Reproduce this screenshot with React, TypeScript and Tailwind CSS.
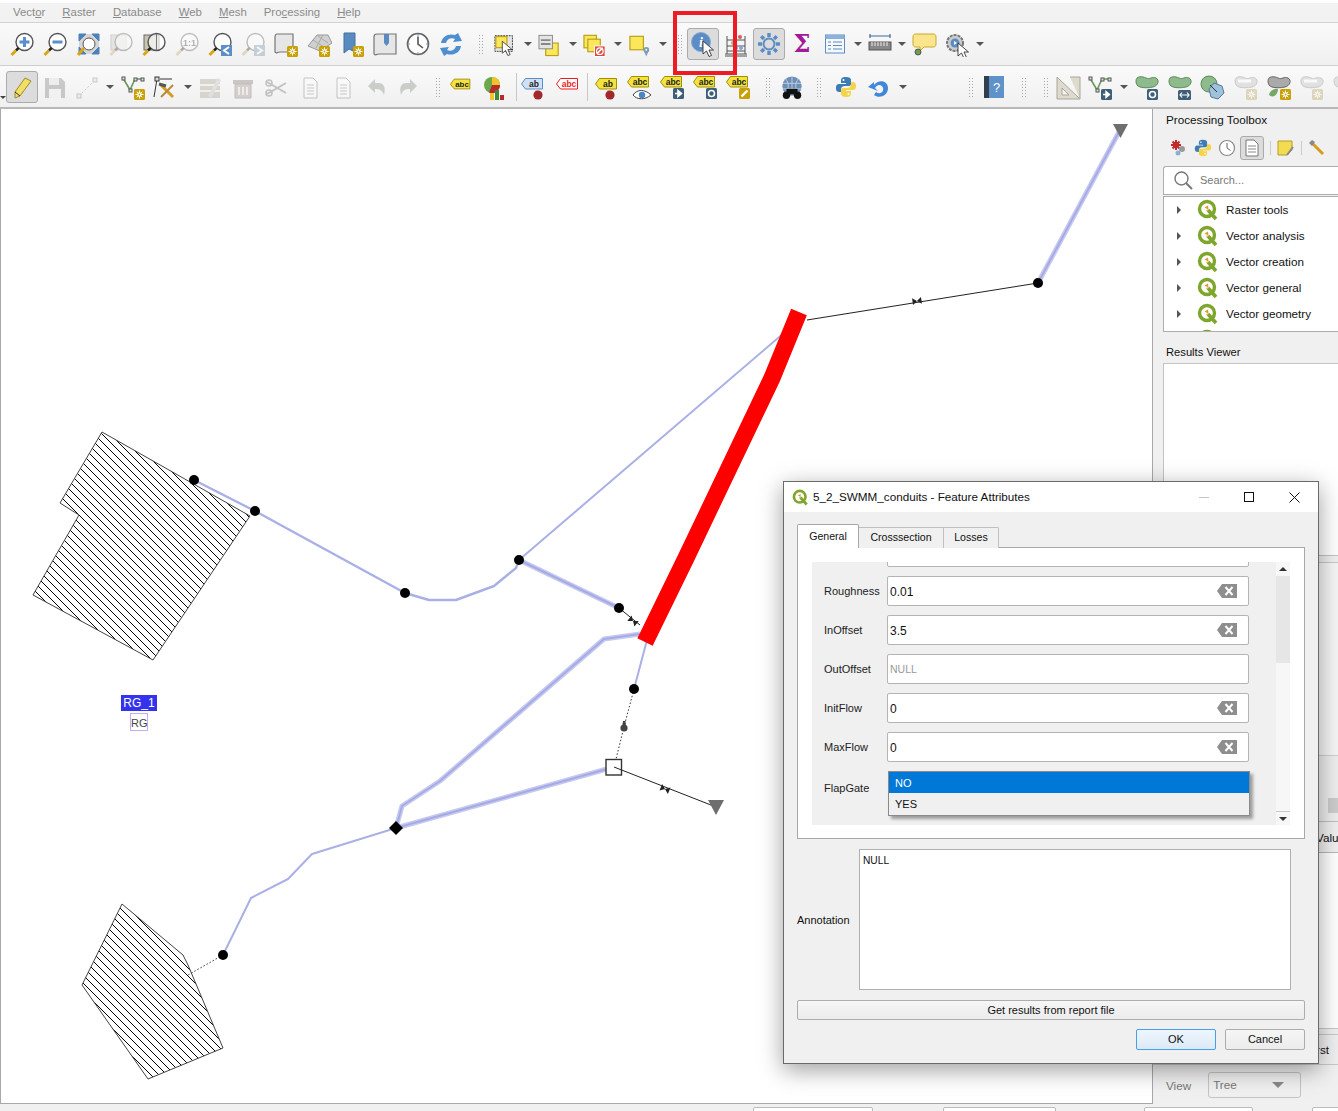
import type { ReactNode } from "react"

const Ico = ({ children, off, w = 26 }: { children: ReactNode; off?: boolean; w?: number }) => (
  <svg width={w} height={26} viewBox={`0 -1 ${w} 26`} className={off ? "opacity-35 saturate-50" : ""}>
    {children}
  </svg>
)

const Cursor = ({ x, y, s = 1 }: { x: number; y: number; s?: number }) => (
  <path
    transform={`translate(${x} ${y}) scale(${s})`}
    d="M0 0 L0 13 L3.5 10 L6 15.5 L8.5 14.5 L6 9 L10.5 9 Z"
    fill="#fff"
    stroke="#333"
    strokeWidth="0.9"
  />
)

const Badge = ({ x = 14, y = 14 }: { x?: number; y?: number }) => (
  <g transform={`translate(${x} ${y})`}>
    <rect width="11" height="11" rx="1.5" fill="#c9a005" />
    <path d="M5.5 1.5 V9.5 M1.5 5.5 H9.5 M2.7 2.7 L8.3 8.3 M8.3 2.7 L2.7 8.3" stroke="#fff" strokeWidth="1" />
    <circle cx="5.5" cy="5.5" r="2.2" fill="#fff" />
    <circle cx="5.5" cy="5.5" r="0.9" fill="#c9a005" />
  </g>
)

const Lens = ({ children, off, back }: { children?: ReactNode; off?: boolean; back?: ReactNode }) => (
  <Ico off={off}>
    {back}
    <circle cx="15.5" cy="10" r="8.5" fill={back ? "#ffffffaa" : "#fff"} stroke="#555" strokeWidth="1.4" />
    {children}
    <path d="M9.7 15.8 L7 18.5" stroke="#222" strokeWidth="2.6" />
    <path d="M7 18.5 L2.5 23" stroke="#dba514" strokeWidth="3" />
  </Ico>
)

const BlueBox = ({ dir }: { dir: "l" | "r" }) => (
  <g>
    <rect x="14" y="13" width="11" height="11" fill="#5c8fc7" />
    <path d={dir === "l" ? "M22 15 L17 18.5 L22 22" : "M17 15 L22 18.5 L17 22"} fill="none" stroke="#fff" strokeWidth="2" />
  </g>
)

const Tag = ({ text, fill = "#f4e33e", line = "#a38f00", color = "#222", x = 0, y = 3 }: { text: string; fill?: string; line?: string; color?: string; x?: number; y?: number }) => (
  <g transform={`translate(${x} ${y})`}>
    <path d="M0.5 6 L4.5 0.5 H21.5 V11 H4.5 Z" fill={fill} stroke={line} />
    <text x="13" y="9" fontSize="8.5" fontWeight="700" textAnchor="middle" fill={color} fontFamily="Liberation Sans">
      {text}
    </text>
  </g>
)

const Pin = () => (
  <g>
    <path d="M14 14 L16.5 14 L16.5 19 H14 Z" fill="#cfcfcf" />
    <circle cx="17" cy="20" r="4.6" fill="#a3282c" />
  </g>
)

const Poly = ({ fill = "#8dbb8b", line = "#5e8a5c" }: { fill?: string; line?: string }) => (
  <path d="M2 6 C2 1 8 1 12 3 C16 5 18 1 22 3 C26 5 24 11 19 12 C14 13 10 13 6 12 C3 11 2 9 2 6 Z" fill={fill} stroke={line} />
)

const Qgis = ({ size = 22 }: { size?: number }) => (
  <svg width={size} height={size} viewBox="0 0 22 22">
    <circle cx="10" cy="10" r="7.5" fill="#fff" stroke="#7ea62d" strokeWidth="3.4" />
    <path d="M11 11 L19 20" stroke="#7ea62d" strokeWidth="3.6" />
    <path d="M7.5 8.5 L11 6.5 L11.5 10.5 Z" fill="#ef8f2f" />
    <path d="M9 12 L10 10 L11.5 11.5 Z" fill="#e8b23a" />
  </svg>
)

const Python = ({ w = 22 }: { w?: number }) => (
  <svg width={w} height={w} viewBox="0 0 22 22">
    <path d="M11 1 C7 1 6 2 6 5 V7 H11 V8 H4 C1 8 1 11 1 12 C1 15 2 16 5 16 H6 V13 C6 11 8 10 10 10 H14 C16 10 16 8 16 7 V4 C16 2 14 1 11 1 Z" fill="#3d7db5" />
    <path d="M11 21 C15 21 16 20 16 17 V15 H11 V14 H18 C21 14 21 11 21 10 C21 7 20 6 17 6 H16 V9 C16 11 14 12 12 12 H8 C6 12 6 14 6 15 V18 C6 20 8 21 11 21 Z" fill="#f6d44a" />
    <circle cx="8.5" cy="4" r="1" fill="#fff" />
    <circle cx="13.5" cy="18" r="1" fill="#fff" />
  </svg>
)

const row1 = [
  <Lens><path d="M15.5 5 V15 M10.5 10 H20.5" stroke="#5b8fc9" strokeWidth="3" /></Lens>,
  <Lens><path d="M10.5 10 H20.5" stroke="#5b8fc9" strokeWidth="3" /></Lens>,
  <Ico>
    <rect x="4" y="2" width="20" height="20" fill="#d5d5d5" />
    <path d="M4 2 H11 L4 9 Z M24 2 V9 L17 2 Z M24 22 H17 L24 15 Z M4 22 V15 L11 22 Z" fill="#4d82ba" stroke="#4d82ba" />
    <circle cx="14" cy="12" r="6" fill="#fff" stroke="#555" />
    <path d="M9 16 L3 23" stroke="#dba514" strokeWidth="3" />
  </Ico>,
  <Lens off back={<rect x="3" y="3" width="15" height="15" fill="#c8c6b0" stroke="#888" />} />,
  <Lens back={<rect x="3" y="3" width="15" height="15" fill="#c8c6b0" stroke="#666" />}><path d="M15.5 2 V18" stroke="#777" /></Lens>,
  <Lens off><text x="15.5" y="13.5" fontSize="9" fontWeight="700" textAnchor="middle" fill="#333" fontFamily="Liberation Sans">1:1</text></Lens>,
  <Lens><BlueBox dir="l" /></Lens>,
  <Lens off><BlueBox dir="r" /></Lens>,
  <Ico>
    <path d="M4 2 H20 V20 H7 C4 20 3 22 2 20 V5 C2 3 3 2 4 2 Z" fill="#e6e6e6" stroke="#777" strokeWidth="1.2" />
    <Badge />
  </Ico>,
  <Ico>
    <path d="M2 14 L11 3 H22 L26 11 L14 19 Z" fill="#d0d0d0" stroke="#999" />
    <path d="M7 8 L18 15 M12 4 L22 11 M10 16 L17 3" stroke="#aaa" />
    <Badge x="13" y="14" />
  </Ico>,
  <Ico>
    <path d="M5 1 H16 V20 L10 17 L5 21 Z" fill="#5a8bc0" stroke="#44709f" />
    <Badge x="14" y="14" />
  </Ico>,
  <Ico>
    <path d="M5 2 H24 V22 H7 C4 22 3 24 2 22 V5 C2 3 3 2 5 2 Z" fill="#e6e6e6" stroke="#777" strokeWidth="1.2" />
    <path d="M12 2 H17 V11 L14.5 14 L12 11 Z" fill="#5a8bc0" />
  </Ico>,
  <Ico>
    <circle cx="13" cy="12" r="10.5" fill="#fff" stroke="#666" strokeWidth="1.6" />
    <path d="M13 4.5 V12 L18 16" fill="none" stroke="#555" strokeWidth="1.6" />
    <circle cx="13" cy="3" r="0.8" fill="#5a8bc0" />
    <circle cx="13" cy="21" r="0.8" fill="#5a8bc0" />
    <circle cx="4" cy="12" r="0.8" fill="#5a8bc0" />
    <circle cx="22" cy="12" r="0.8" fill="#5a8bc0" />
  </Ico>,
  <Ico>
    <path d="M3 11 C4 4 11 1 17 3 L20 1 L24 9 L15 10 L17 7 C13 5 9 7 8 11 Z" fill="#4f8fd0" />
    <path d="M23 14 C22 21 15 24 9 22 L6 24 L2 16 L11 15 L9 18 C13 20 17 18 18 14 Z" fill="#4f8fd0" />
  </Ico>,
]

const Drop = () => <span className="w-0 h-0 border-x-[4px] border-t-[4px] border-x-transparent border-t-[#555]" />

const Grip = () => <span className="w-[6px] h-[20px] bg-[radial-gradient(#a8a8a8_0.7px,transparent_0.8px)] bg-[length:3px_3px]" />

const Slot = ({ w, on, children }: { w: string; on?: boolean; children?: ReactNode }) => (
  <div className={`${w} ${on ? "h-[32px] bg-[#dcdcdc] border border-[#ababab] rounded-[3px]" : "h-full"} shrink-0 flex items-center justify-center`}>
    {children}
  </div>
)

const Arrow = ({ w }: { w: string }) => (
  <Slot w={w}>
    <Drop />
  </Slot>
)

const YellowBox = ({ x, y, s = 13 }: { x: number; y: number; s?: number }) => (
  <rect x={x} y={y} width={s} height={s} fill="#fbe75c" stroke="#bb9f14" strokeWidth="1.2" />
)

function TopToolbar() {
  return (
    <div className="h-[43px] shrink-0 flex items-center pl-[5px] bg-gradient-to-b from-[#fafafa] to-[#f0f0f0] border-b border-[#cfcfcf]">
      {row1.map((icon, i) => (
        <Slot key={i} w="w-[33px]">
          {icon}
        </Slot>
      ))}
      <Slot w="w-[27px]"><Grip /></Slot>
      <Slot w="w-[24px]">
        <Ico>
          <rect x="1" y="3" width="19" height="17" fill="#e4e4e4" stroke="#333" strokeDasharray="2 1" />
          <YellowBox x={2} y={4} s={12} />
          <Cursor x={9} y={9} />
        </Ico>
      </Slot>
      <Arrow w="w-[20px]" />
      <Slot w="w-[25px]">
        <Ico>
          <YellowBox x={8} y={11} />
          <rect x="1" y="3" width="14" height="14" fill="#e4e4e4" stroke="#888" />
          <path d="M3 8 H13 M3 12 H13" stroke="#888" strokeWidth="2" />
        </Ico>
      </Slot>
      <Arrow w="w-[20px]" />
      <Slot w="w-[25px]">
        <Ico>
          <YellowBox x={1} y={3} />
          <YellowBox x={5} y={7} />
          <rect x="12" y="14" width="11" height="11" fill="#d84a3f" stroke="#fff" />
          <path d="M14.5 22 L20.5 16" stroke="#fff" strokeWidth="1.6" />
          <circle cx="17.5" cy="19.5" r="3.4" fill="none" stroke="#fff" strokeWidth="1.3" />
        </Ico>
      </Slot>
      <Arrow w="w-[20px]" />
      <Slot w="w-[25px]">
        <Ico>
          <YellowBox x={2} y={4} s={14} />
          <circle cx="19" cy="18" r="3" fill="#7d9cb8" />
          <path d="M16.5 19 L19 25 L21.5 19 Z" fill="#7d9cb8" />
          <circle cx="19" cy="18" r="1" fill="#fff" />
        </Ico>
      </Slot>
      <Arrow w="w-[20px]" />
      <Slot w="w-[14px]"><Grip /></Slot>
      <Slot w="w-[32px]" on>
        <Ico>
          <circle cx="11" cy="10" r="9.5" fill="#5b8cc4" stroke="#84a8d3" />
          <text x="11" y="15" fontSize="14" fontWeight="700" fontStyle="italic" textAnchor="middle" fill="#fff" fontFamily="Liberation Serif">i</text>
          <Cursor x={13} y={9} />
        </Ico>
      </Slot>
      <Slot w="w-[34px]">
        <Ico w={24}>
          <path d="M3 4 V22 M21 4 V22 M1 22 H23 M1 24 H23 M3 8 H21 M3 14 H21 M3 19 H21" stroke="#555" strokeWidth="1" fill="none" />
          <circle cx="16" cy="5" r="2" fill="#d85a55" />
          <circle cx="9" cy="11" r="2" fill="#8fc06a" />
          <circle cx="12" cy="16" r="2" fill="#7ea8d6" />
          <circle cx="17" cy="16" r="2" fill="#7ea8d6" />
        </Ico>
      </Slot>
      <Slot w="w-[32px]" on>
        <Ico>
          <circle cx="13" cy="12" r="5.5" fill="none" stroke="#5b8cc4" strokeWidth="2" />
          <path d="M13 1 V5 M13 19 V23 M2 12 H6 M20 12 H24 M5.2 4.2 L8 7 M20.8 4.2 L18 7 M5.2 19.8 L8 17 M20.8 19.8 L18 17" stroke="#5b8cc4" strokeWidth="3.4" />
        </Ico>
      </Slot>
      <Slot w="w-[34px]">
        <svg width="30" height="40" viewBox="0 0 30 40">
          <text x="15" y="28" fontSize="24" fontWeight="700" textAnchor="middle" fill="#a01a9a" fontFamily="DejaVu Serif">Σ</text>
        </svg>
      </Slot>
      <Slot w="w-[32px]">
        <Ico w={22}>
          <rect x="1.5" y="3" width="19" height="18" fill="#f4f8fc" stroke="#5b8cc4" />
          <rect x="1.5" y="3" width="19" height="4" fill="#8db2da" />
          <path d="M4 10 H7 M9 10 H18 M4 13.5 H7 M9 13.5 H18 M4 17 H7 M9 17 H18" stroke="#5b8cc4" />
        </Ico>
      </Slot>
      <Arrow w="w-[14px]" />
      <Slot w="w-[30px]">
        <Ico w={24}>
          <path d="M2 4 H22 M2 2 V6 M22 2 V6" stroke="#3d6a9a" strokeWidth="1.2" />
          <rect x="1" y="10" width="22" height="8" fill="#888" stroke="#555" />
          <path d="M4 10 V14 M7 10 V14 M10 10 V14 M13 10 V14 M16 10 V14 M19 10 V14" stroke="#eee" />
        </Ico>
      </Slot>
      <Arrow w="w-[14px]" />
      <Slot w="w-[32px]">
        <Ico>
          <path d="M4 2 H21 C23 2 24 3 24 5 V12 C24 14 23 15 21 15 H12 L8 19 V15 H4 C2 15 1 14 1 12 V5 C1 3 2 2 4 2 Z" fill="#fbe58c" stroke="#c8aa2a" />
          <circle cx="6" cy="20" r="3" fill="#6f9e48" stroke="#555" />
        </Ico>
      </Slot>
      <Slot w="w-[32px]">
        <Ico>
          <circle cx="11" cy="11" r="8" fill="#ccc" stroke="#777" strokeWidth="2" strokeDasharray="3 1" />
          <circle cx="11" cy="11" r="4.5" fill="#5b8cc4" />
          <path d="M10 9 L13 11 L10 13 Z" fill="#fff" />
          <Cursor x={14} y={11} />
        </Ico>
      </Slot>
      <Arrow w="w-[14px]" />
    </div>
  )
}

const Trash = ({ off }: { off?: boolean }) => (
  <Ico off={off}>
    <rect x="3" y="5" width="20" height="4" fill="#8b6a60" />
    <path d="M5 9 H21 V23 H5 Z" fill="#a88" stroke="#755" />
    <path d="M9 12 V20 M13 12 V20 M17 12 V20" stroke="#fff" strokeWidth="1.4" />
  </Ico>
)

const Page = () => (
  <Ico off>
    <path d="M7 3 H16 L20 7 V23 H7 Z" fill="#fff" stroke="#666" />
    <path d="M10 10 H17 M10 13 H17 M10 16 H17 M10 19 H17" stroke="#777" />
  </Ico>
)

const Curve = ({ flip }: { flip?: boolean }) => (
  <Ico off>
    <g transform={flip ? "translate(26 0) scale(-1 1)" : ""}>
      <path d="M5 11 L12 4 V8 H16 C21 8 23 13 21 20 C19 15 17 14 12 14 V18 Z" fill="#7a8a6a" />
    </g>
  </Ico>
)

function BottomToolbar() {
  return (
    <div className="h-[43px] shrink-0 flex items-center pl-[6px] relative overflow-hidden bg-gradient-to-b from-[#fafafa] to-[#f0f0f0] border-b-2 border-[#b8b8b8]">
      <span className="absolute left-0 top-[30px] w-0 h-0 border-x-[3px] border-t-[3px] border-x-transparent border-t-[#444]" />
      <Slot w="w-[32px]" on>
        <Ico>
          <path d="M16 3 L22 6 L11 21 L6 23 L6 17 Z" fill="#f2df62" stroke="#9a8a2a" />
          <path d="M6 17 L11 21" stroke="#333" />
        </Ico>
      </Slot>
      <Slot w="w-[34px]">
        <Ico off>
          <path d="M3 3 H19 L23 7 V23 H3 Z" fill="#777" />
          <rect x="7" y="3" width="10" height="7" fill="#ddd" />
          <rect x="7" y="14" width="12" height="9" fill="#eee" />
        </Ico>
      </Slot>
      <Slot w="w-[32px]">
        <Ico off>
          <path d="M4 21 L20 5" stroke="#777" strokeDasharray="2 2" />
          <rect x="2" y="19" width="4" height="4" fill="#ddd" stroke="#777" />
          <rect x="18" y="3" width="4" height="4" fill="#ddd" stroke="#777" />
        </Ico>
      </Slot>
      <Arrow w="w-[12px]" />
      <Slot w="w-[36px]">
        <Ico>
          <path d="M2 3 L9 15 L14 4 H22" fill="none" stroke="#6a9a5a" strokeWidth="1.6" />
          <rect x="1" y="2" width="3" height="3" fill="#ddd" stroke="#555" />
          <rect x="8" y="14" width="3" height="3" fill="#ddd" stroke="#555" />
          <rect x="13" y="3" width="3" height="3" fill="#ddd" stroke="#555" />
          <rect x="20" y="3" width="3" height="3" fill="#ddd" stroke="#555" />
          <Badge x="13" y="14" />
        </Ico>
      </Slot>
      <Slot w="w-[28px]">
        <Ico>
          <path d="M4 4 L1 22" stroke="#333" />
          <rect x="2" y="2" width="4" height="4" fill="#ddd" stroke="#333" />
          <path d="M7 4 H19" stroke="#333" />
          <path d="M8 10 L20 22" stroke="#d89a22" strokeWidth="3" />
          <path d="M20 10 L8 22" stroke="#b88a3a" strokeWidth="2" />
          <path d="M6 9 L13 11" stroke="#555" strokeWidth="3" />
        </Ico>
      </Slot>
      <Arrow w="w-[16px]" />
      <Slot w="w-[30px]">
        <Ico off>
          <rect x="2" y="4" width="20" height="19" fill="#a39d72" />
          <path d="M2 10 H22 M2 16 H22" stroke="#fff" strokeWidth="1.4" />
          <path d="M10 21 L20 3 L23 5 L13 23 Z" fill="#bbb" />
        </Ico>
      </Slot>
      <Slot w="w-[34px]"><Trash off /></Slot>
      <Slot w="w-[34px]">
        <Ico off>
          <path d="M3 7 L22 18 M3 19 L22 8" stroke="#666" strokeWidth="2" />
          <circle cx="5" cy="8" r="3" fill="none" stroke="#666" strokeWidth="1.6" />
          <circle cx="5" cy="18" r="3" fill="none" stroke="#666" strokeWidth="1.6" />
        </Ico>
      </Slot>
      <Slot w="w-[32px]"><Page /></Slot>
      <Slot w="w-[34px]"><Page /></Slot>
      <Slot w="w-[32px]"><Curve /></Slot>
      <Slot w="w-[34px]"><Curve flip /></Slot>
      <Slot w="w-[24px]"><Grip /></Slot>
      <Slot w="w-[24px]"><Ico><Tag text="abc" /></Ico></Slot>
      <Slot w="w-[42px]">
        <Ico>
          <circle cx="10" cy="10" r="8" fill="#6aa84a" />
          <path d="M10 10 L10 2 A8 8 0 0 1 18 10 Z" fill="#f2c32a" />
          <path d="M10 10 L18 10 A8 8 0 0 1 7 17.5 Z" fill="#b92a2a" />
          <rect x="8" y="18" width="4" height="7" fill="#f2c32a" />
          <rect x="13" y="15" width="4" height="10" fill="#3d8a3a" />
          <rect x="18" y="20" width="4" height="5" fill="#b92a2a" />
        </Ico>
      </Slot>
      <span className="w-px h-[28px] self-center bg-[#c8c8c8] shrink-0" />
      <Slot w="w-[34px]"><Ico><Tag text="ab" fill="#cfe2f5" line="#5b8cc4" /><Pin /></Ico></Slot>
      <Slot w="w-[36px]"><Ico><Tag text="abc" fill="#fff" line="#e81c1c" color="#e81c1c" /></Ico></Slot>
      <span className="w-px h-[28px] self-center bg-[#c8c8c8] shrink-0" />
      <Slot w="w-[36px]"><Ico><Tag text="ab" x={2} /><Pin /></Ico></Slot>
      <Slot w="w-[32px]">
        <Ico>
          <Tag text="abc" y={1} />
          <path d="M6 20 C10 14 18 14 24 20 C18 25 10 25 6 20 Z" fill="#fff" stroke="#444" />
          <circle cx="15" cy="20" r="3.2" fill="#4a86c5" />
        </Ico>
      </Slot>
      <Slot w="w-[34px]">
        <Ico>
          <Tag text="abc" y={1} />
          <rect x="13" y="13" width="11" height="11" rx="1.5" fill="#3f5f78" />
          <path d="M15 18.5 H20 M18 15.5 L21.5 18.5 L18 21.5 Z" stroke="#fff" strokeWidth="1.6" fill="#fff" />
        </Ico>
      </Slot>
      <Slot w="w-[32px]">
        <Ico>
          <Tag text="abc" y={1} />
          <rect x="13" y="13" width="11" height="11" rx="1.5" fill="#3f5f78" />
          <circle cx="18.5" cy="18.5" r="3" fill="none" stroke="#fff" strokeWidth="1.6" />
        </Ico>
      </Slot>
      <Slot w="w-[34px]">
        <Ico>
          <Tag text="abc" y={1} />
          <rect x="13" y="13" width="11" height="11" rx="1.5" fill="#c9a005" />
          <path d="M15.5 21.5 L21.5 15.5" stroke="#fff" strokeWidth="2.4" />
        </Ico>
      </Slot>
      <Slot w="w-[24px]"><Grip /></Slot>
      <Slot w="w-[24px]">
        <Ico>
          <circle cx="13" cy="11" r="10.5" fill="#6d8fb5" />
          <path d="M3 8 H23 M3 14 H23 M13 1 V21 M6 3 C10 8 10 14 6 19 M20 3 C16 8 16 14 20 19" stroke="#d5e0ec" strokeWidth="0.8" fill="none" />
          <circle cx="7" cy="21" r="4" fill="#111" />
          <circle cx="19" cy="21" r="4" fill="#111" />
          <rect x="7" y="14" width="12" height="6" fill="#111" />
        </Ico>
      </Slot>
      <Slot w="w-[30px]"><Grip /></Slot>
      <Slot w="w-[24px]"><Python /></Slot>
      <Slot w="w-[40px]">
        <Ico>
          <path d="M3 12 L9 7 L9 10 C13 4 23 5 23 13 C23 21 14 24 9 20 L11 17 C15 20 19 17 18 13 C17 9 12 9 10 13 L13 16 Z" fill="#3f88d8" />
        </Ico>
      </Slot>
      <Arrow w="w-[10px]" />
      <div className="w-[55px] shrink-0" />
      <Slot w="w-[16px]"><Grip /></Slot>
      <Slot w="w-[30px]">
        <svg width="20" height="22" viewBox="0 0 20 22">
          <rect width="20" height="22" fill="#5f92c8" />
          <rect width="5" height="22" fill="#2f3f50" />
          <text x="12.5" y="16" fontSize="13" textAnchor="middle" fill="#fff" fontFamily="Liberation Sans">?</text>
        </svg>
      </Slot>
      <Slot w="w-[30px]"><Grip /></Slot>
      <Slot w="w-[14px]"><Grip /></Slot>
      <Slot w="w-[32px]">
        <Ico>
          <path d="M1 2 L24 24 H1 Z M6 13 V20 H13 Z" fill="#dedbce" stroke="#aaa69a" fillRule="evenodd" />
          <path d="M14 2 H24 V24" fill="#dedbce" stroke="#aaa69a" />
        </Ico>
      </Slot>
      <Slot w="w-[32px]">
        <Ico>
          <path d="M2 3 L9 15 L14 4 H22" fill="none" stroke="#6a9a5a" strokeWidth="1.6" />
          <rect x="1" y="2" width="3" height="3" fill="#ddd" stroke="#555" />
          <rect x="8" y="14" width="3" height="3" fill="#ddd" stroke="#555" />
          <rect x="13" y="3" width="3" height="3" fill="#ddd" stroke="#555" />
          <rect x="20" y="3" width="3" height="3" fill="#ddd" stroke="#555" />
          <rect x="13" y="14" width="11" height="11" rx="1.5" fill="#3f5f78" />
          <path d="M15 19.5 H20 M18 16.5 L21.5 19.5 L18 22.5 Z" stroke="#fff" strokeWidth="1.4" fill="#fff" />
        </Ico>
      </Slot>
      <Arrow w="w-[14px]" />
      <Slot w="w-[32px]">
        <Ico>
          <Poly />
          <rect x="13" y="14" width="11" height="11" rx="1.5" fill="#3f5f78" />
          <circle cx="18.5" cy="19.5" r="3" fill="none" stroke="#fff" strokeWidth="1.6" />
        </Ico>
      </Slot>
      <Slot w="w-[34px]">
        <Ico>
          <Poly />
          <rect x="11" y="15" width="13" height="10" rx="1.5" fill="#3f5f78" />
          <path d="M13 20 H22 M15 17.5 L13 20 L15 22.5 M20 17.5 L22 20 L20 22.5" stroke="#fff" strokeWidth="1.2" fill="none" />
        </Ico>
      </Slot>
      <Slot w="w-[32px]">
        <Ico>
          <circle cx="9" cy="9" r="8" fill="#8dbb8b" stroke="#5e8a5c" />
          <path d="M14 8 L22 11 L24 18 L18 24 L11 22 L9 14 Z" fill="#9fc3dd" stroke="#54789a" />
          <path d="M10 10 L17 17" stroke="#333" />
        </Ico>
      </Slot>
      <Slot w="w-[34px]">
        <Ico off>
          <Poly fill="#bbb" line="#777" />
          <path d="M5 6 H18" stroke="#fff" strokeWidth="3" />
          <Badge x="13" y="14" />
        </Ico>
      </Slot>
      <Slot w="w-[32px]">
        <Ico>
          <Poly fill="#aaa" line="#666" />
          <path d="M3 20 C4 15 9 13 12 14 C12 19 8 24 3 20 Z" fill="#78a868" />
          <Badge x="14" y="14" />
        </Ico>
      </Slot>
      <Slot w="w-[34px]">
        <Ico off>
          <Poly fill="#bbb" line="#777" />
          <path d="M5 6 H18" stroke="#fff" strokeWidth="3" />
          <Badge x="13" y="14" />
        </Ico>
      </Slot>
      <Slot w="w-[32px]">
        <Ico off>
          <Poly fill="#bbb" line="#777" />
        </Ico>
      </Slot>
    </div>
  )
}

const Bowtie = ({ x, y, a }: { x: number; y: number; a: number }) => (
  <path transform={`translate(${x} ${y}) rotate(${a})`} d="M-4.5 -3.5 L4.5 3.5 L4.5 -3.5 L-4.5 3.5 Z" fill="#222" />
)

const LILAC = "#aab0e6"

// thick conduits are a pale band with a darker core
const thick = [
  "M1120 130 L1038 283",
  "M519 560 L619 608",
  "M640 634 L604 639 L440 781 L402 806 L396 828",
  "M396 828 L614 767",
]

function MapCanvas() {
  return (
    <div className="relative flex-1 min-w-0 bg-white border-l border-r border-b border-[#a8a8a8]">
      <svg width="1151" height="994" viewBox="1 109 1151 994" className="block">
        <defs>
          <pattern id="hatch" x="1" y="109" width="8" height="8" patternUnits="userSpaceOnUse">
            {[0, 1, 2, 3, 4, 5, 6, 7].map((i) => (
              <rect key={i} x={i} y={i} width="1" height="1" fill="#000" />
            ))}
          </pattern>
        </defs>
        <path d="M102 432 L250 516 L153 660 L33 595 L79 515 L60 503 Z" fill="url(#hatch)" stroke="#444" />
        <path d="M122 904 L183 955 L188 965 L223 1048 L148 1079 L82 985 Z" fill="url(#hatch)" stroke="#444" />

        <g fill="none" stroke={LILAC} strokeLinejoin="round">
          <path d="M785 332 L519 560" strokeWidth="2" />
          <path d="M194 480 L255 511 L405 593 L429 600 L456 600 L494 586 L516 568 L519 560" strokeWidth="2.4" />
          <path d="M396 828 L312 854 L288 879 L251 898 L223 955" strokeWidth="2" />
          <path d="M647 640 L634 689" strokeWidth="2" />
        </g>
        <g fill="none" strokeLinejoin="round">
          {thick.map((d) => (
            <path key={d} d={d} stroke="#c6c9f2" strokeWidth="5" />
          ))}
          {thick.map((d) => (
            <path key={d} d={d} stroke="#a6abe4" strokeWidth="2" />
          ))}
        </g>

        <path d="M1038 283 L807 320" stroke="#222" fill="none" />
        <path d="M619 608 L640 625" stroke="#222" fill="none" />
        <path d="M614 767 L716 807" stroke="#222" fill="none" />
        <path d="M634 689 L624 727 L614 767" stroke="#333" strokeDasharray="1.5 2" fill="none" />
        <path d="M223 955 L188 975" stroke="#333" strokeDasharray="1.5 2" fill="none" />

        <path d="M799 312 L772 378 L686 558 L645 642" stroke="#ff0000" strokeWidth="17" fill="none" strokeLinejoin="round" />

        <Bowtie x={917} y={301} a={-8} />
        <Bowtie x={633} y={621} a={38} />
        <Bowtie x={665} y={789} a={22} />

        {[[194, 480], [255, 511], [405, 593], [519, 560], [619, 608], [634, 689], [1038, 283], [223, 955]].map(([x, y]) => (
          <circle key={x} cx={x} cy={y} r="5" fill="#000" />
        ))}
        <circle cx="624" cy="728" r="3.6" fill="#444" />
        <path d="M622 728 L623 721 H625.5 L626 728 Z" fill="#444" />
        <path d="M396 821 L403 828 L396 835 L389 828 Z" fill="#000" />
        <rect x="606" y="759.5" width="15.5" height="15.5" fill="#fff" stroke="#333" strokeWidth="1.4" />
        <path d="M614 767 L621.5 770" stroke="#222" fill="none" />
        <path d="M1113 124 H1128 L1120.5 138 Z" fill="#6e6e6e" />
        <path d="M708 800 H724 L716 815 Z" fill="#6e6e6e" />
      </svg>

      <div className="absolute left-[120px] top-[586px] h-[16px] w-[36px] bg-[#3333ee] text-white text-[12px] leading-[16px] text-center">RG_1</div>
      <div className="absolute left-[129px] top-[604px] h-[18px] w-[18px] border border-[#bdb0ff] bg-white text-[#444] text-[11px] leading-[18px] text-center">RG</div>
    </div>
  )
}

const toolbox = ["Raster tools", "Vector analysis", "Vector creation", "Vector general", "Vector geometry"]

function Sidebar() {
  return (
    <div className="w-[185px] shrink-0 flex flex-col bg-[#f0f0f0] text-[#111] text-[11.7px] overflow-hidden">
      <div className="h-[23px] pl-[13px] pt-[3px] leading-[15px]">Processing Toolbox</div>
      <div className="h-[32px] mb-[2px] flex items-center pl-[17px] gap-[6px]">
        <svg width="18" height="18" viewBox="0 0 18 18">
          <path d="M6 1 V11 M1 6 H11 M2.5 2.5 L9.5 9.5 M9.5 2.5 L2.5 9.5" stroke="#c42a2a" strokeWidth="2" />
          <circle cx="6" cy="6" r="3" fill="#c42a2a" />
          <circle cx="12" cy="10" r="3" fill="#999" />
          <circle cx="8" cy="14" r="2.5" fill="#8ab0d8" />
        </svg>
        <Python w={18} />
        <svg width="18" height="18" viewBox="0 0 18 18">
          <circle cx="9" cy="9" r="7.5" fill="#fff" stroke="#888" strokeWidth="1.2" />
          <path d="M9 4 V9 L12.5 11.5" stroke="#666" fill="none" />
        </svg>
        <div className="w-[24px] h-[24px] -ml-[2px] bg-[#dcdcdc] border border-[#aaa] rounded-[3px] flex items-center justify-center">
          <svg width="14" height="18" viewBox="0 0 14 18">
            <path d="M1 1 H9 L13 5 V17 H1 Z" fill="#fff" stroke="#777" />
            <path d="M3 7 H11 M3 10 H11 M3 13 H11" stroke="#888" />
          </svg>
        </div>
        <span className="w-px h-[14px] bg-[#ccc]" />
        <svg width="18" height="18" viewBox="0 0 18 18">
          <path d="M1 2 H15 V11 L10 16 H1 Z" fill="#f4dc52" stroke="#b89c20" />
          <path d="M10 16 L16 8" stroke="#888" strokeWidth="2" />
        </svg>
        <span className="w-px h-[14px] bg-[#ccc]" />
        <svg width="18" height="18" viewBox="0 0 18 18">
          <path d="M3 3 L15 15" stroke="#d89a22" strokeWidth="3" />
          <path d="M1 4 L4 1 L7 3 L4 7 Z" fill="#888" />
        </svg>
      </div>
      <div className="ml-[10px] h-[29px] bg-white border border-[#adadad] border-r-0 rounded-tl-[3px] flex items-center pl-[10px] gap-[7px]">
        <svg width="19" height="19" viewBox="0 0 19 19">
          <circle cx="7.5" cy="7.5" r="6.5" fill="none" stroke="#777" strokeWidth="1.4" />
          <path d="M12 12 L18 18" stroke="#777" strokeWidth="2" />
        </svg>
        <span className="text-[#777] text-[11px]">Search...</span>
      </div>
      <div className="ml-[10px] h-[136px] mt-px bg-white border border-[#adadad] border-r-0 overflow-hidden">
        {toolbox.map((t) => (
          <div key={t} className="h-[26px] flex items-center pl-[13px]">
            <span className="w-0 h-0 border-y-[4px] border-l-[4px] border-y-transparent border-l-[#555]" />
            <span className="ml-[16px] w-[29px] shrink-0"><Qgis /></span>
            <span>{t}</span>
          </div>
        ))}
        <div className="h-[26px] flex items-center pl-[33px]"><Qgis /></div>
      </div>
      <div className="h-[31px] pl-[13px] pt-[13px] leading-[15px] text-[11.2px]">Results Viewer</div>
      <div className="ml-[10px] h-[193px] bg-white border border-[#c4c4c4] border-r-0" />
      <div className="h-[7px] border-b border-[#c8c8c8]" />
      <div className="h-[193px] bg-[#f6f6f6] border-b border-[#d0d0d0]" />
      <div className="h-[66px] bg-[#eeeeee] border-b border-[#c0c0c0] flex items-start justify-end pt-[41px]">
        <svg width="10" height="16" viewBox="0 0 10 16">
          <path d="M0 1 H10 V16 H0 Z" fill="#ccc" />
        </svg>
      </div>
      <div className="h-[31px] border-b border-[#b8b8b8] pl-[163px] leading-[32px] whitespace-nowrap overflow-hidden">Value</div>
      <div className="h-[175px] bg-white" />
      <div className="h-[7px] border-y border-[#c8c8c8]" />
      <div className="h-[30px] border-b border-[#c8c8c8] text-right pr-[9px] leading-[30px]">Worst</div>
      <div className="flex-1 flex items-start pl-[13px] pt-[7px] gap-[17px]">
        <span className="mt-[6px] text-[#777] leading-[15px]">View</span>
        <div className="w-[93px] h-[26px] border border-[#c4c4c4] rounded-[3px] flex items-center justify-between pl-[4px] pr-[16px] text-[#777]">
          Tree
          <span className="w-0 h-0 border-x-[6px] border-t-[6px] border-x-transparent border-t-[#888]" />
        </div>
      </div>
    </div>
  )
}

const ClearBtn = () => (
  <svg width="20" height="14" viewBox="0 0 20 14" className="shrink-0 mr-[11px]">
    <path d="M5 0 H20 V14 H5 L0 7 Z" fill="#8e8e8e" />
    <path d="M8.5 3 L15.5 11 M15.5 3 L8.5 11" stroke="#fff" strokeWidth="2" />
  </svg>
)

function Field({ label, value, muted, clear = true }: { label: string; value: string; muted?: boolean; clear?: boolean }) {
  return (
    <div className="h-[30px] flex items-center mb-[9px]">
      <span className="w-[63px] shrink-0 pt-px text-[#222] text-[11px]">{label}</span>
      <div className="w-[362px] h-[30px] bg-white border border-[#b4b4b4] rounded-[2px] flex items-center justify-between pl-[2px]">
        <span className={muted ? "pt-px text-[#999] text-[10.5px]" : "pt-px text-[#111] text-[12px]"}>{value}</span>
        {clear && <ClearBtn />}
      </div>
    </div>
  )
}

function Dialog() {
  return (
    <div className="absolute left-[783px] top-[481px] w-[536px] h-[583px] bg-[#f0f0f0] border border-[#6a6a6a] shadow-[0_6px_22px_rgba(0,0,0,0.38)] flex flex-col text-[#111] text-[11px]">
      <div className="h-[30px] shrink-0 bg-white flex items-center pl-[8px]">
        <Qgis size={17} />
        <span className="ml-[4px] flex-1 pb-px text-[11.7px]">5_2_SWMM_conduits - Feature Attributes</span>
        <span className="w-[10px] h-px bg-[#c4c4c4] mr-[35px]" />
        <span className="w-[10px] h-[10px] border border-[#111] mr-[35px]" />
        <svg width="11" height="11" viewBox="0 0 11 11" className="mr-[18px]">
          <path d="M0.5 0.5 L10.5 10.5 M10.5 0.5 L0.5 10.5" stroke="#111" />
        </svg>
      </div>

      <div className="flex-1 flex flex-col px-[13px] pt-[13px] pb-[13px]">
        <div className="flex items-end h-[23px] relative z-10 text-[10.6px]">
          <div className="w-[62px] h-[24px] bg-white border border-b-0 border-[#a8a8a8] rounded-t-[2px] flex items-center justify-center">General</div>
          <div className="w-[85px] h-[21px] bg-[#f0f0f0] border border-l-0 border-b-0 border-[#c0c0c0] flex items-center justify-center">Crosssection</div>
          <div className="w-[55px] h-[21px] bg-[#f0f0f0] border border-l-0 border-b-0 border-[#c0c0c0] rounded-tr-[2px] flex items-center justify-center">Losses</div>
        </div>
        <div className="h-[292px] -mt-px bg-white border border-[#a8a8a8] p-[14px] pb-[13px]">
          <div className="h-full flex bg-[#f0f0f0] overflow-hidden">
            <div className="flex-1 pl-[12px] -mt-[25px]">
              <Field label="" value="" clear={false} />
              <Field label="Roughness" value="0.01" />
              <Field label="InOffset" value="3.5" />
              <Field label="OutOffset" value="NULL" muted clear={false} />
              <Field label="InitFlow" value="0" />
              <Field label="MaxFlow" value="0" />
              <div className="flex">
                <span className="w-[63px] shrink-0 text-[#222] pt-[9px]">FlapGate</span>
                <div className="w-[362px] ml-px h-[45px] bg-[#f0f0f0] border border-[#8a8a8a] shadow-[3px_3px_3px_rgba(0,0,0,0.35)]">
                  <div className="h-[21px] bg-[#0078d7] text-white pl-[6px] leading-[23px]">NO</div>
                  <div className="h-[21px] pl-[6px] leading-[23px]">YES</div>
                </div>
              </div>
            </div>
            <div className="w-[14px] shrink-0 bg-[#f7f7f7] flex flex-col items-center">
              <div className="h-[14px] flex items-center">
                <span className="w-0 h-0 border-x-[4px] border-b-[4px] border-x-transparent border-b-[#333]" />
              </div>
              <div className="w-full h-[87px] bg-[#e6e6e6]" />
              <div className="flex-1" />
              <div className="w-full h-[14px] border-t border-[#c8c8c8] flex items-center justify-center">
                <span className="w-0 h-0 border-x-[4px] border-t-[4px] border-x-transparent border-t-[#333]" />
              </div>
            </div>
          </div>
        </div>

        <div className="flex items-center h-[141px] mt-[10px]">
          <span className="w-[62px] shrink-0 pt-px">Annotation</span>
          <div className="w-[432px] h-full bg-white border border-[#b0b0b0] px-[3px] py-[3px] leading-[15px] text-[10.2px]">NULL</div>
        </div>

        <button className="mt-[10px] h-[20px] w-full bg-gradient-to-b from-[#f6f6f6] to-[#ececec] border border-[#adadad] rounded-[2px] leading-[18px]">
          Get results from report file
        </button>
        <div className="mt-[9px] flex justify-end gap-[9px]">
          <button className="w-[80px] h-[21px] bg-gradient-to-b from-[#eef6fd] to-[#dceaf6] border border-[#4a9ee8] rounded-[2px] leading-[19px]">OK</button>
          <button className="w-[80px] h-[21px] bg-gradient-to-b from-[#f6f6f6] to-[#ececec] border border-[#adadad] rounded-[2px] leading-[19px]">Cancel</button>
        </div>
      </div>
    </div>
  )
}

const menus: [string, string, string][] = [
  ["Vect", "o", "r"],
  ["", "R", "aster"],
  ["", "D", "atabase"],
  ["", "W", "eb"],
  ["", "M", "esh"],
  ["Pro", "c", "essing"],
  ["", "H", "elp"],
]

export default function App() {
  return (
    <div className="relative w-[1338px] h-[1111px] overflow-hidden flex flex-col bg-[#f0f0f0] font-['Liberation_Sans',Arial,sans-serif] text-[12px]">
      <div className="h-[3px] shrink-0 bg-white" />
      <div className="h-[20px] shrink-0 flex items-center pl-[13px] gap-[17px] bg-[#f2f2f2] border-b border-[#d2d2d2] text-[#8a8a8a] text-[11.4px]">
        {menus.map(([a, b, c]) => (
          <span key={a + b}>
            {a}
            <u>{b}</u>
            {c}
          </span>
        ))}
      </div>
      <TopToolbar />
      <BottomToolbar />

      <div className="flex-1 min-h-0 flex">
        <MapCanvas />
        <Sidebar />
      </div>

      <div className="h-[7px] shrink-0 relative overflow-hidden">
        <div className="absolute left-[753px] top-[3px] w-[120px] h-[8px] bg-white border border-[#bbb] rounded-t-[2px]" />
        <div className="absolute left-[943px] top-[3px] w-[113px] h-[8px] bg-white border border-[#bbb] rounded-t-[2px]" />
        <div className="absolute left-[1144px] top-[3px] w-[109px] h-[8px] bg-white border border-[#bbb] rounded-t-[2px]" />
        <div className="absolute left-[1312px] top-[3px] w-[30px] h-[8px] bg-white border border-[#bbb] rounded-t-[2px]" />
      </div>

      {/* the red box drawn on the screenshot, around the identify tool */}
      <div className="absolute left-[673px] top-[11px] w-[64px] h-[64px] border-[4px] border-[#ed1c24] pointer-events-none" />

      <Dialog />
    </div>
  )
}
